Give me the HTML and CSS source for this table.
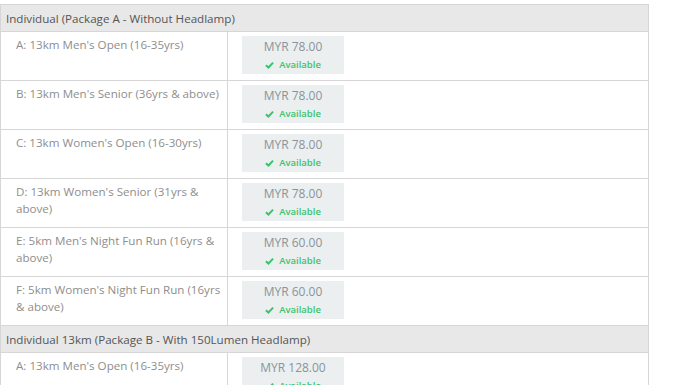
FILE: index.html
```html
<!DOCTYPE html>
<html>
<head>
<meta charset="utf-8">
<link rel="stylesheet" href="styles.css">
</head>
<body>
<table class="tickets">
  <colgroup><col class="c1"><col class="c2"></colgroup>
  <tbody>
    <tr class="group"><th colspan="2">Individual (Package A - Without Headlamp)</th></tr>
    <tr>
      <td class="cat">A: 13km Men's Open (16-35yrs)</td>
      <td class="pricecell"><div class="price"><div class="amt">MYR 78.00</div><div class="avail"><svg viewBox="0 0 10 8" class="chk"><path d="M1 4.2 L3.8 6.8 L9 1.4" /></svg>Available</div></div></td>
    </tr>
    <tr>
      <td class="cat">B: 13km Men's Senior (36yrs &amp; above)</td>
      <td class="pricecell"><div class="price"><div class="amt">MYR 78.00</div><div class="avail"><svg viewBox="0 0 10 8" class="chk"><path d="M1 4.2 L3.8 6.8 L9 1.4" /></svg>Available</div></div></td>
    </tr>
    <tr>
      <td class="cat">C: 13km Women's Open (16-30yrs)</td>
      <td class="pricecell"><div class="price"><div class="amt">MYR 78.00</div><div class="avail"><svg viewBox="0 0 10 8" class="chk"><path d="M1 4.2 L3.8 6.8 L9 1.4" /></svg>Available</div></div></td>
    </tr>
    <tr>
      <td class="cat">D: 13km Women's Senior (31yrs &amp; above)</td>
      <td class="pricecell"><div class="price"><div class="amt">MYR 78.00</div><div class="avail"><svg viewBox="0 0 10 8" class="chk"><path d="M1 4.2 L3.8 6.8 L9 1.4" /></svg>Available</div></div></td>
    </tr>
    <tr>
      <td class="cat">E: 5km Men's Night Fun Run (16yrs &amp; above)</td>
      <td class="pricecell"><div class="price"><div class="amt">MYR 60.00</div><div class="avail"><svg viewBox="0 0 10 8" class="chk"><path d="M1 4.2 L3.8 6.8 L9 1.4" /></svg>Available</div></div></td>
    </tr>
    <tr>
      <td class="cat">F: 5km Women's Night Fun Run (16yrs &amp; above)</td>
      <td class="pricecell"><div class="price"><div class="amt">MYR 60.00</div><div class="avail"><svg viewBox="0 0 10 8" class="chk"><path d="M1 4.2 L3.8 6.8 L9 1.4" /></svg>Available</div></div></td>
    </tr>
    <tr class="group"><th colspan="2">Individual 13km (Package B - With 150Lumen Headlamp)</th></tr>
    <tr>
      <td class="cat">A: 13km Men's Open (16-35yrs)</td>
      <td class="pricecell"><div class="price"><div class="amt">MYR 128.00</div><div class="avail"><svg viewBox="0 0 10 8" class="chk"><path d="M1 4.2 L3.8 6.8 L9 1.4" /></svg>Available</div></div></td>
    </tr>
  </tbody>
</table>
</body>
</html>
```
FILE: styles.css
```css
html, body {
  margin: 0;
  padding: 0;
  background: #fff;
}
body {
  padding-top: 4px;
  font-family: "Open Sans", "Noto Sans", sans-serif;
}
.tickets {
  border-collapse: collapse;
  width: 649px;
  table-layout: fixed;
}
.c1 {
  width: 227px;
}
.tickets td, .tickets th {
  border: 1px solid #d6d6d6;
}
.group th {
  background: #e8e8e8;
  text-align: left;
  font-weight: normal;
  font-size: 11.6px;
  color: #555;
  height: 26px;
  padding: 0 5px;
  line-height: 17px;
}
.cat {
  vertical-align: top;
  padding: 4px 1px 0 15px;
  font-size: 11.6px;
  line-height: 17px;
  color: #8e8e8e;
  height: 44px;
}
.pricecell {
  padding: 4px 14px 4px 14px;
  vertical-align: top;
}
.price {
  width: 102px;
  height: 38px;
  box-sizing: border-box;
  background: #ecefef;
  text-align: center;
  padding-top: 2px;
}
.amt {
  font-size: 12px;
  line-height: 18px;
  color: #8a939b;
}
.avail {
  font-size: 9.5px;
  line-height: 17px;
  color: #3cc36e;
  font-weight: 600;
}
.chk {
  width: 9px;
  height: 8px;
  margin-right: 5px;
  vertical-align: -0.5px;
}
.chk path {
  fill: none;
  stroke: #3cc36e;
  stroke-width: 2.2;
}
```
